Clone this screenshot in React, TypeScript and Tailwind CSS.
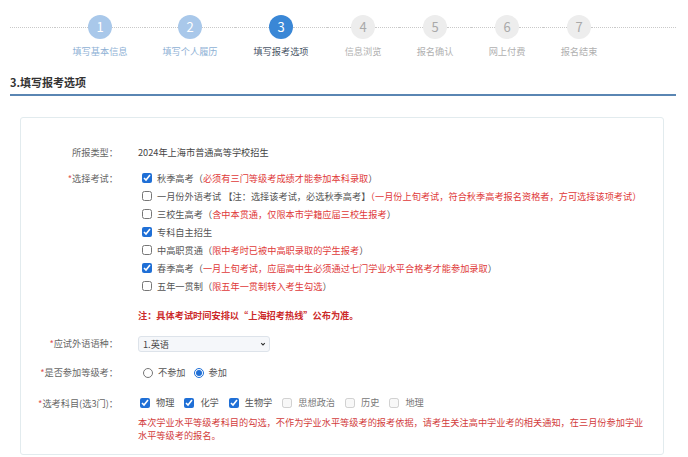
import type { ReactNode } from 'react'

const STEPS = [
  { n: 1, label: '填写基本信息', w: 'w-[90px]', state: 'done' },
  { n: 2, label: '填写个人履历', w: 'w-[90px]', state: 'done' },
  { n: 3, label: '填写报考选项', w: 'w-[92px]', state: 'active' },
  { n: 4, label: '信息浏览', w: 'w-[72px]', state: 'todo' },
  { n: 5, label: '报名确认', w: 'w-[72px]', state: 'todo' },
  { n: 6, label: '网上付费', w: 'w-[72px]', state: 'todo' },
  { n: 7, label: '报名结束', w: 'w-[72px]', state: 'todo' },
] as const

const CIRCLE: Record<string, string> = {
  done: 'bg-[#a9c8ea] text-white',
  active: 'bg-[#3a87d6] text-white',
  todo: 'bg-[#ededed] text-[#a9a9a9]',
}

const LABEL: Record<string, string> = {
  done: 'text-[#8eb1d5]',
  active: 'text-[#4a5566]',
  todo: 'text-[#b0b0b0]',
}

type Exam = { name: string; checked: boolean; note?: ReactNode }

const EXAMS: Exam[] = [
  { name: '秋季高考', checked: true, note: <>（<Red>必须有三门等级考成绩才能参加本科录取</Red>）</> },
  {
    name: '一月份外语考试',
    checked: false,
    note: (
      <>
        {' '}【注：选择该考试，必选秋季高考】<Red>（一月份上旬考试，符合秋季高考报名资格者，方可选择该项考试）</Red>
      </>
    ),
  },
  { name: '三校生高考', checked: false, note: <>（<Red>含中本贯通，仅限本市学籍应届三校生报考</Red>）</> },
  { name: '专科自主招生', checked: true },
  { name: '中高职贯通', checked: false, note: <>（<Red>限中考时已被中高职录取的学生报考</Red>）</> },
  { name: '春季高考', checked: true, note: <>（<Red>一月上旬考试，应届高中生必须通过七门学业水平合格考才能参加录取</Red>）</> },
  { name: '五年一贯制', checked: false, note: <>（<Red>限五年一贯制转入考生勾选</Red>）</> },
]

const SUBJECTS = [
  { name: '物理', checked: true, disabled: false },
  { name: '化学', checked: true, disabled: false },
  { name: '生物学', checked: true, disabled: false },
  { name: '思想政治', checked: false, disabled: true },
  { name: '历史', checked: false, disabled: true },
  { name: '地理', checked: false, disabled: true },
]

function Red({ children }: { children: ReactNode }) {
  return <span className="text-[#e03a3a]">{children}</span>
}

function Dots() {
  return <div className="h-0 flex-1 border-t border-dotted border-[#c9c9c9]" />
}

function Label({ children, required }: { children: ReactNode; required?: boolean }) {
  return (
    <div className="w-[97px] shrink-0 text-right text-[#666]">
      {required && <span className="text-[#e05555]">*</span>}
      {children}
    </div>
  )
}

export default function App() {
  return (
    <div
      className="h-[457px] w-[688px] overflow-hidden bg-white text-[9.2px] text-[#555]"
      style={{ fontFamily: '"Noto Sans CJK SC", "Noto Sans", sans-serif' }}
    >
      {/* Stepper */}
      <div className="flex pl-[10px] pr-[12px] pt-[15px]">
        <div className="flex h-[24px] w-[45px] items-center">
          <Dots />
        </div>
        {STEPS.map((s) => (
          <div key={s.n} className={`flex flex-col items-center ${s.w}`}>
            <div className="flex h-[24px] w-full items-center">
              <Dots />
              <div
                className={`flex h-[24px] w-[24px] items-center justify-center rounded-full text-[13px] ${CIRCLE[s.state]}`}
              >
                {s.n}
              </div>
              <Dots />
            </div>
            <div className={`mt-[6px] whitespace-nowrap leading-[13px] ${LABEL[s.state]}`}>{s.label}</div>
          </div>
        ))}
        <div className="flex h-[24px] flex-1 items-center">
          <Dots />
        </div>
      </div>

      {/* Section title */}
      <div className="ml-[10px] mr-[12px] mt-[16px] border-b-2 border-[#5a86b3] pb-[4px] text-[11px] font-bold leading-[16px] text-[#333]">
        3.填写报考选项
      </div>

      {/* Form card */}
      <div className="ml-[20px] mt-[21px] w-[644px] rounded-[3px] border border-[#e2ebee] pb-[12px] pt-[25px]">
        <div className="flex gap-[20px] leading-[18px]">
          <Label>所报类型：</Label>
          <div className="text-[#444]">2024年上海市普通高等学校招生</div>
        </div>

        <div className="mt-[8px] flex gap-[20px] leading-[18px]">
          <Label required>选择考试：</Label>
          <div className="flex flex-col">
            {EXAMS.map((e) => (
              <label key={e.name} className="flex h-[18px] items-center whitespace-nowrap">
                <input
                  type="checkbox"
                  defaultChecked={e.checked}
                  className="m-0 ml-[4px] mr-[5px] h-[10px] w-[10px] accent-[#1f6fd6]"
                />
                <span>
                  {e.name}
                  {e.note}
                </span>
              </label>
            ))}
          </div>
        </div>

        <div className="mt-[11px] flex gap-[20px] leading-[18px]">
          <div className="w-[97px] shrink-0" />
          <div className="font-bold text-[#cc2a2a]">注：具体考试时间安排以“上海招考热线”公布为准。</div>
        </div>

        <div className="mt-[11px] flex h-[18px] items-center gap-[20px]">
          <Label required>应试外语语种：</Label>
          <div className="relative h-[16px] w-[132px]">
            <select className="h-full w-full appearance-none rounded-[3px] border border-[#dde3ea] bg-[#f5f7fa] pl-[4px] text-[9.2px] leading-[14px] text-[#444] outline-none">
              <option>1.英语</option>
            </select>
            <svg
              viewBox="0 0 10 10"
              className="pointer-events-none absolute right-[4px] top-[5px] h-[6px] w-[6px]"
            >
              <path d="M2 3.5 L5 6.5 L8 3.5" fill="none" stroke="#333" strokeWidth="1.8" />
            </svg>
          </div>
        </div>

        <div className="mt-[11px] flex h-[18px] items-center gap-[20px]">
          <Label required>是否参加等级考：</Label>
          <div className="flex items-center">
            <label className="flex items-center">
              <input type="radio" name="lv" className="m-0 ml-[5px] mr-[5px] h-[10px] w-[10px] accent-[#1f6fd6]" />
              不参加
            </label>
            <label className="ml-[8px] flex items-center">
              <input
                type="radio"
                name="lv"
                defaultChecked
                className="m-0 mr-[5px] h-[10px] w-[10px] accent-[#1f6fd6]"
              />
              参加
            </label>
          </div>
        </div>

        <div className="mt-[12px] flex gap-[20px]">
          <Label required>
            <span className="leading-[18px]">选考科目(选3门)：</span>
          </Label>
          <div className="flex flex-col">
            <div className="flex h-[18px] items-center gap-[8px]">
              {SUBJECTS.map((s) => (
                <label key={s.name} className={`flex items-center ${s.disabled ? 'text-[#777]' : ''}`}>
                  <input
                    type="checkbox"
                    defaultChecked={s.checked}
                    disabled={s.disabled}
                    className="m-0 ml-[2px] mr-[6px] h-[10px] w-[10px] accent-[#1f6fd6]"
                  />
                  {s.name}
                </label>
              ))}
            </div>
            <p className="mt-[4px] w-[512px] leading-[13px] text-[#d23c3c]">
              本次学业水平等级考科目的勾选，不作为学业水平等级考的报考依据，请考生关注高中学业考的相关通知，在三月份参加学业水平等级考的报名。
            </p>
          </div>
        </div>
      </div>
    </div>
  )
}
